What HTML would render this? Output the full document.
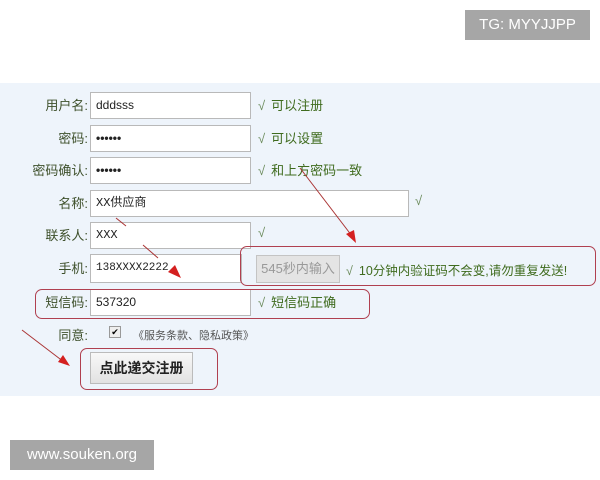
<!DOCTYPE html>
<html><head><meta charset="utf-8"><style>
body{margin:0;width:600px;height:480px;background:#fff;position:relative;overflow:hidden;font-family:"Liberation Sans","Noto Sans CJK SC",sans-serif;}
.band{position:absolute;left:0;top:83px;width:600px;height:313px;background:#eef4fb;}
.lbl{position:absolute;right:512px;font-size:13px;color:#3d4f2a;white-space:nowrap;margin-top:-2px;}
.in{position:absolute;left:90px;width:158px;height:25px;background:#fff;border:1px solid #b9b9b9;box-sizing:content-box;font-size:12px;color:#222;line-height:25px;padding-left:5px;}
.ok{position:absolute;font-size:13px;color:#3f6b1e;white-space:nowrap;margin-top:-2px;}
.ck{color:#6a8a5a;font-style:italic;margin-right:6px;}
.red{position:absolute;border:1.5px solid #b04050;border-radius:7px;}
.wm{position:absolute;background:#a6a6a6;color:#fff;font-size:15px;text-align:center;}
</style></head><body>
<div class="band"></div>
<div class="wm" style="left:465px;top:10px;width:125px;height:30px;line-height:30px">TG: MYYJJPP</div>
<div class="wm" style="left:10px;top:440px;width:144px;height:30px;line-height:30px">www.souken.org</div>

<div class="lbl" style="top:97px">用户名:</div>
<div class="in" style="top:92px;width:154px">dddsss</div>
<div class="ok" style="left:258px;top:97px"><span class="ck">√</span>可以注册</div>

<div class="lbl" style="top:130px">密码:</div>
<div class="in" style="top:125px;width:154px;font-weight:bold">••••••</div>
<div class="ok" style="left:258px;top:130px"><span class="ck">√</span>可以设置</div>

<div class="lbl" style="top:162px">密码确认:</div>
<div class="in" style="top:157px;width:154px;font-weight:bold">••••••</div>
<div class="ok" style="left:258px;top:162px"><span class="ck">√</span>和上方密码一致</div>

<div class="lbl" style="top:195px">名称:</div>
<div class="in" style="top:190px;width:312px;font-family:'Liberation Mono','Noto Sans CJK SC',monospace">XX供应商</div>
<div class="ok" style="left:415px;top:195px"><span class="ck">√</span></div>

<div class="lbl" style="top:227px">联系人:</div>
<div class="in" style="top:222px;width:154px;font-family:'Liberation Mono',monospace">XXX</div>
<div class="ok" style="left:258px;top:227px"><span class="ck">√</span></div>

<div class="lbl" style="top:260px">手机:</div>
<div class="in" style="top:254px;width:145px;height:27px;line-height:27px;font-family:'Liberation Mono',monospace;font-size:11px">138XXXX2222</div>
<div style="position:absolute;left:256px;top:255px;width:82px;height:26px;background:#e4e4e4;border:1px solid #c4c4c4;color:#999;font-size:13px;line-height:26px;text-align:center">545秒内输入</div>
<div class="ok" style="left:346px;top:262px;font-size:12.5px"><span class="ck">√</span>10分钟内验证码不会变,请勿重复发送!</div>

<div class="lbl" style="top:294px">短信码:</div>
<div class="in" style="top:289px;width:154px">537320</div>
<div class="ok" style="left:258px;top:294px"><span class="ck">√</span>短信码正确</div>

<div class="lbl" style="top:327px;right:512px">同意:</div>
<div style="position:absolute;left:109px;top:326px;width:10px;height:10px;border:1px solid #999;background:#eee;font-size:9px;line-height:10px;text-align:center">✔</div>
<div style="position:absolute;left:133px;top:327px;font-size:11px;color:#555">《服务条款、隐私政策》</div>

<div style="position:absolute;left:90px;top:352px;width:101px;height:30px;background:linear-gradient(#f8f8f8,#e2e2e2);border:1px solid #bbb;font-size:14px;font-weight:bold;color:#222;line-height:30px;text-align:center">点此递交注册</div>

<div class="red" style="left:240px;top:246px;width:354px;height:38px"></div>
<div class="red" style="left:35px;top:289px;width:333px;height:28px"></div>
<div class="red" style="left:80px;top:348px;width:136px;height:40px"></div>

<svg style="position:absolute;left:0;top:0" width="600" height="480">
<g stroke="#a33" stroke-width="1" fill="none">
<line x1="300" y1="168" x2="352" y2="236"/>
<line x1="116" y1="218" x2="126" y2="226"/>
<line x1="143" y1="245" x2="158" y2="258"/>
<line x1="22" y1="330" x2="64" y2="362"/>
</g>
<g fill="#d42020">
<polygon points="356,243 346,234 354,230"/>
<polygon points="181,278 168,272 175,265"/>
<polygon points="70,366 58,362 63,355"/>
</g>
</svg>
</body></html>
